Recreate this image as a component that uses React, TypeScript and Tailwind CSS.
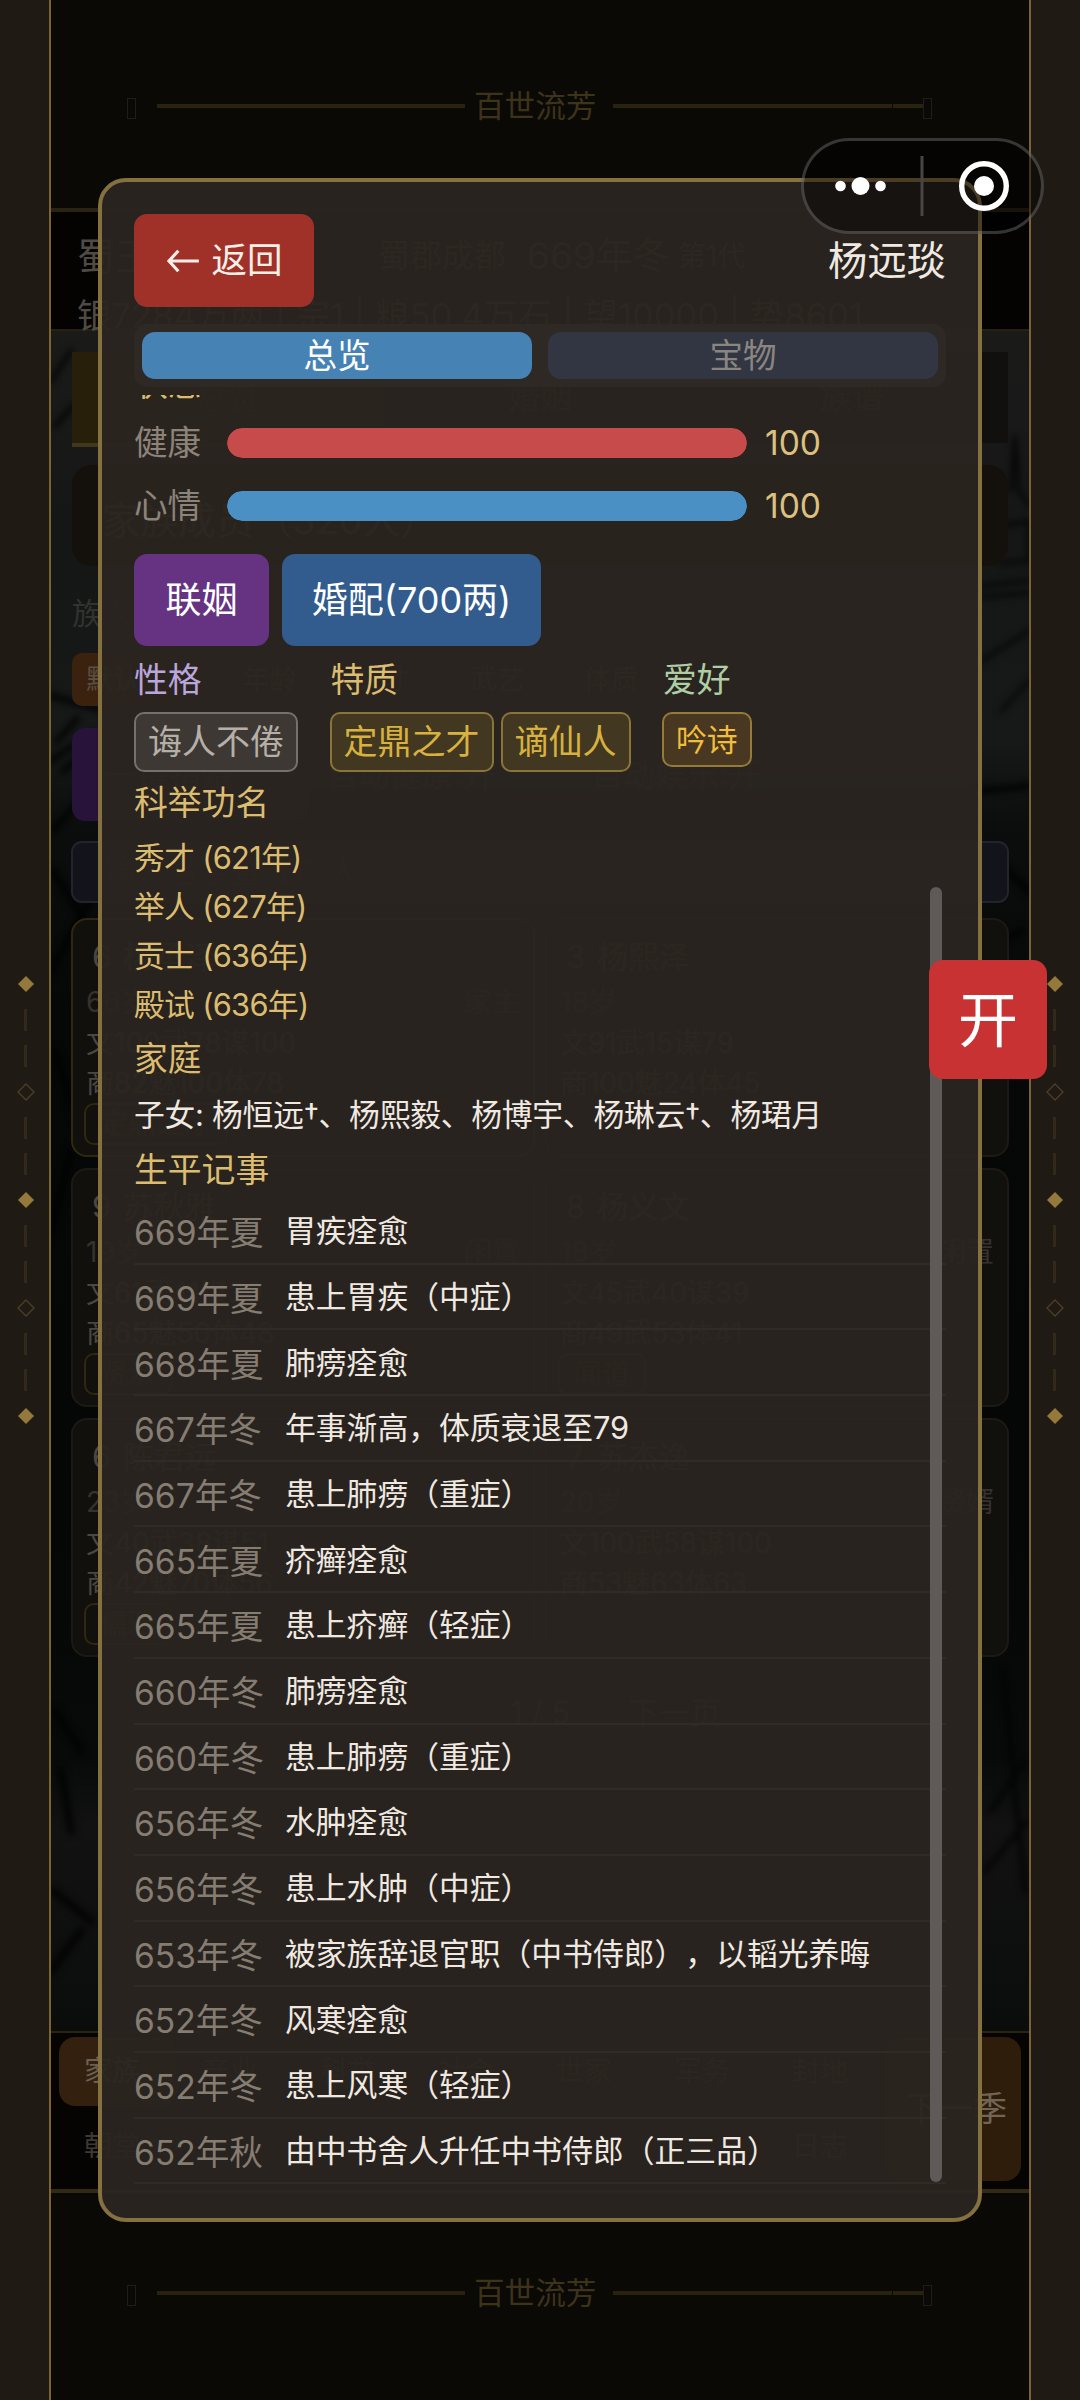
import { clsx } from 'clsx';

type Tone = 'gray' | 'gold' | 'amber';

type Member = {
  index: string;
  name: string;
  age: string;
  status: string;
  line1: string;
  line2: string;
  tag: string;
  highlight?: boolean;
};

const HISTORY = [
  { year: '669年夏', text: '胃疾痊愈' },
  { year: '669年夏', text: '患上胃疾（中症）' },
  { year: '668年夏', text: '肺痨痊愈' },
  { year: '667年冬', text: '年事渐高，体质衰退至79' },
  { year: '667年冬', text: '患上肺痨（重症）' },
  { year: '665年夏', text: '疥癣痊愈' },
  { year: '665年夏', text: '患上疥癣（轻症）' },
  { year: '660年冬', text: '肺痨痊愈' },
  { year: '660年冬', text: '患上肺痨（重症）' },
  { year: '656年冬', text: '水肿痊愈' },
  { year: '656年冬', text: '患上水肿（中症）' },
  { year: '653年冬', text: '被家族辞退官职（中书侍郎），以韬光养晦' },
  { year: '652年冬', text: '风寒痊愈' },
  { year: '652年冬', text: '患上风寒（轻症）' },
  { year: '652年秋', text: '由中书舍人升任中书侍郎（正三品）' },
];

const DEGREES = ['秀才 (621年)', '举人 (627年)', '贡士 (636年)', '殿试 (636年)'];

const MEMBERS: Member[] = [
  { index: '6', name: '杨承泽', age: '66岁', status: '家主', line1: '文100武78谋100', line2: '商82魅100体78', tag: '定鼎之才', highlight: true },
  { index: '3', name: '杨熙泽', age: '18岁', status: '', line1: '文91武15谋79', line2: '商100魅24体45', tag: '' },
  { index: '9', name: '苏秋雅', age: '19岁', status: '闲置', line1: '文61武41谋30', line2: '商65魅50体48', tag: '贤淑' },
  { index: '8', name: '杨义文', age: '18岁', status: '闲置', line1: '文45武40谋39', line2: '商49武53体41', tag: '闻道' },
  { index: '6', name: '陈君远', age: '23岁', status: '', line1: '文40武38谋51', line2: '商42魅70体56', tag: '儒雅' },
  { index: '7', name: '苏杰逸', age: '20岁', status: '赘婿', line1: '文100武58谋100', line2: '商53魅63体63', tag: '' },
];

const NAV_ROWS = [
  ['家族', '产业', '科举', '社会', '世家', '军务', '封地'],
  ['朝堂', '', '', '', '', '', '日志'],
];

const ORNAMENTS = ['solid', 'dash', 'dash', 'hollow', 'dash', 'dash', 'solid', 'dash', 'dash', 'hollow', 'dash', 'dash', 'solid'];

const TAG_TONES: Record<Tone, string> = {
  gray: 'h-[60px] text-[34px] border-[#75706b] bg-[#3d3834] text-[#b5afa8]',
  gold: 'h-[60px] text-[34px] border-[#8a7539] bg-[#423821] text-[#d8b13f]',
  amber: 'h-[55px] text-[30.8px] border-[#967a37] bg-[#483821] text-[#f3bd3c]',
};

function SideRail({ right }: { right?: boolean }) {
  return (
    <div
      className={clsx(
        'flex w-[51px] shrink-0 flex-col items-center justify-center border-[#7b6336] bg-[#1f1a14]',
        right ? 'border-l-2 pr-[2px]' : 'border-r-2 pl-[2px]',
      )}
    >
      {ORNAMENTS.map((kind, i) => (
        <div key={i} className="flex h-[36.05px] w-full items-center justify-center">
          {kind === 'dash' ? (
            <div className="h-[22px] w-[3px] bg-[#33291a]" />
          ) : (
            <svg width="18" height="18" viewBox="0 0 18 18">
              <path
                d="M9 1 17 9 9 17 1 9Z"
                fill={kind === 'solid' ? '#94793a' : 'none'}
                stroke={kind === 'solid' ? 'none' : '#4d3f26'}
                strokeWidth="1.3"
              />
            </svg>
          )}
        </div>
      ))}
    </div>
  );
}

function Banner() {
  return (
    <div className="flex h-[40px] items-center pl-[76px] text-[30.6px] leading-[40px] text-[#3d3318]">
      <div className="mt-[4px] h-[21px] w-[9px] border border-[#221d10]" />
      <div className="ml-[21px] h-[4px] w-[308px] bg-[#29220f]" />
      <span className="ml-[9px] w-[122px] whitespace-nowrap">百世流芳</span>
      <div className="ml-[17px] h-[4px] w-[279px] bg-[#29220f]" />
      <div className="ml-px h-[4px] w-[30px] bg-[#29220f]" />
      <div className="mt-[4px] h-[21px] w-[9px] border border-[#221d10]" />
    </div>
  );
}

/* Ink wash behind the family list */
function InkWash() {
  return (
    <svg className="absolute inset-0 h-full w-full" viewBox="0 0 978 1700" preserveAspectRatio="none">
      <defs>
        <linearGradient id="ink" x1="0" y1="0" x2="0" y2="1">
          <stop offset="0" stopColor="#1a1a19" />
          <stop offset="0.12" stopColor="#151716" />
          <stop offset="0.24" stopColor="#171918" />
          <stop offset="0.29" stopColor="#0c0e0e" />
          <stop offset="0.4" stopColor="#060808" />
          <stop offset="0.7" stopColor="#050707" />
          <stop offset="0.84" stopColor="#080a0a" />
          <stop offset="0.88" stopColor="#111211" />
          <stop offset="1" stopColor="#0b0d0c" />
        </linearGradient>
        <filter id="soft" x="-50%" y="-50%" width="200%" height="200%" colorInterpolationFilters="sRGB">
          <feGaussianBlur stdDeviation="3" />
        </filter>
      </defs>
      <rect width="978" height="1700" fill="url(#ink)" />
      <g filter="url(#soft)" fill="none" stroke="#000" strokeOpacity="0.75" strokeLinecap="round">
        <path d="M0 50 20 20 M4 95 22 75" strokeWidth="5" />
        <path d="M0 365 48 378 M6 410 26 388 M0 430 40 402 M12 440 46 412 M2 500 40 455" strokeWidth="7" />
        <path d="M2 540 40 600 M0 640 44 560 M4 720 30 800 M0 900 20 820" strokeWidth="8" />
        <path d="M930 255 978 250 M930 266 978 262 M930 330 978 300 M950 380 978 350" strokeWidth="4" />
        <path d="M930 460 978 455 M935 520 978 560 M930 620 970 600 M940 700 978 640" strokeWidth="8" />
        <path d="M960 160 964 105 968 160 978 175 M948 195 978 190 978 230 950 232" strokeWidth="4" />
        <path d="M952 1340 962 1440 974 1560 M940 1480 974 1430 M934 1540 976 1490" strokeWidth="5" />
        <path d="M4 1380 30 1420 M10 1440 20 1500 M2 1560 40 1590 M0 1640 30 1600" strokeWidth="8" />
      </g>
    </svg>
  );
}

function MemberCard({ member }: { member: Member }) {
  return (
    <div
      className={clsx(
        'flex h-[239px] flex-col rounded-[16px] border-2 bg-[#12100d] px-[13px] text-[28px] text-[#4c4741]',
        member.highlight ? 'border-[#30270f]' : 'border-[#1d1a15]',
      )}
    >
      <div className="mt-[12px] flex h-[50px] items-center pl-[6px] text-[31px] leading-[50px]">
        <span className="w-[31px]">{member.index}</span>
        {member.name}
      </div>
      <div className="flex h-[41px] justify-between leading-[41px] text-[#35322d]">
        <span>{member.age}</span>
        <span>{member.status}</span>
      </div>
      <p className="h-[40px] leading-[40px]">{member.line1}</p>
      <p className="h-[40px] leading-[40px]">{member.line2}</p>
      {member.tag && (
        <div className="-ml-[2px] h-[42px] w-fit rounded-[10px] border-2 border-[#30270f] px-[14px] leading-[38px] text-[#352c18]">
          {member.tag}
        </div>
      )}
    </div>
  );
}

function GameScreen() {
  return (
    <div className="flex h-[2400px] w-full bg-[#0a0906]">
      <SideRail />
      <div className="flex min-w-0 flex-1 flex-col">
        <div className="h-[208px] pt-[86px]">
          <Banner />
        </div>

        {/* Resource header */}
        <div className="h-[123px] border-t-4 border-b-2 border-t-[#2a2312] border-b-[#27210f] bg-[#040302] text-[#4f4b44]">
          <div className="mt-[19px] flex h-[50px] items-center pl-[26px] text-[38px] leading-[50px] whitespace-nowrap">
            <span className="w-[301px]">蜀王</span>
            <span className="w-[149px] text-[32px]">蜀郡成都</span>
            <span className="w-[151px] text-[37px]">669年冬</span>
            <span className="text-[28px]">第1代</span>
          </div>
          <div className="mt-[13px] h-[40px] pl-[26px] text-[34.5px] leading-[44px] whitespace-nowrap">
            银7284万两 | 宗1 | 粮50.4万石 | 望10000 | 势8601
          </div>
        </div>

        {/* Family page */}
        <div className="relative h-[1700px] overflow-hidden">
          <InkWash />
          <div className="relative flex flex-col px-[21px]">
            <div className="mt-[21px] grid h-[91px] grid-cols-3 bg-[#11100e] text-center text-[32px] leading-[91px] text-[#3a362e]">
              <span className="border-b-4 border-[#44361a] bg-[#281f0b]">总览</span>
              <span>婚姻</span>
              <span>族谱</span>
            </div>
            <div className="mt-[22px] h-[101px] rounded-[20px] bg-[#14110c] pl-[30px] text-[38px] leading-[110px] text-[#4f4b44]">
              家族成员（320人）
            </div>
            <div className="mt-[25px] h-[44px] text-[30px] leading-[44px] text-[#323230]">族人排序</div>
            <div className="mt-[18px] flex h-[53px] gap-[60px] text-[27px] leading-[53px] text-[#5a4f45]">
              <span className="w-[110px] rounded-[10px] bg-[#3a220f] pl-[14px]">默认</span>
              <span>年龄</span>
              <span>文才</span>
              <span>武艺</span>
              <span>体质</span>
            </div>
            <div className="mt-[22px] flex h-[93px] text-[32px] leading-[93px] text-[#403a42]">
              <span className="w-[236px] rounded-[13px] bg-[#28133a] pl-[33px]">一键指婚</span>
              <span className="w-[265px] pl-[18px]">自动健康:开</span>
              <span className="pl-[18px]">自动娱乐:开</span>
            </div>
            <div className="-mx-px mt-[20px] h-[62px] rounded-[11px] border-2 border-[#22232c] bg-[#13141b] pl-[30px] text-[32px] leading-[58px] text-[#35363e]">
              输入名字查找族人...
            </div>
            <div className="-mx-px mt-[15px] grid grid-cols-2 gap-x-[10px] gap-y-[11px]">
              {MEMBERS.map((member) => (
                <MemberCard key={member.name} member={member} />
              ))}
            </div>
            <div className="mt-[34px] flex h-[44px] pl-[438px] text-[31px] leading-[44px] text-[#3a3a38]">
              <span className="w-[118px]">1 / 5</span>
              <span>下一页</span>
            </div>
          </div>
        </div>

        {/* Bottom navigation */}
        <div className="flex h-[162px] justify-between border-t-2 border-b-4 border-t-[#2b2411] border-b-[#332a16] bg-[#050403] pr-[8px] pl-[8px] text-[28px]">
          <div className="flex flex-col pt-[4px] text-[#3e3a33]">
            {NAV_ROWS.map((row, r) => (
              <div key={r} className="flex h-[75px]">
                {row.map((label, i) => (
                  <span
                    key={i}
                    className={clsx(
                      'h-[69px] w-[118px] rounded-[16px] pl-[25px] leading-[69px]',
                      r === 0 && i === 0 && 'bg-[#33200f] text-[#6b6054]',
                    )}
                  >
                    {label}
                  </span>
                ))}
              </div>
            ))}
          </div>
          <div className="mt-[4px] h-[144px] w-[136px] rounded-[16px] bg-[#2e1d0b] pr-[14px] text-right text-[34px] leading-[144px] text-[#716656]">
            下一季
          </div>
        </div>

        <div className="pt-[80px]">
          <Banner />
        </div>
      </div>
      <SideRail right />
    </div>
  );
}

function StatBar({ label, value, color }: { label: string; value: number; color: string }) {
  return (
    <div className="flex items-center text-[33.6px] leading-[50px]">
      <span className="w-[93px] text-[#8c837a]">{label}</span>
      <div className="h-[30px] w-[520px] overflow-hidden rounded-full bg-black/40">
        <div className={clsx('h-full rounded-full', color)} style={{ width: `${value}%` }} />
      </div>
      <span className="ml-[18px] text-[#dcc07f]">{value}</span>
    </div>
  );
}

function Tag({ tone, children }: { tone: Tone; children: string }) {
  return (
    <span className={clsx('flex items-center rounded-[10px] border-2 px-[12px] whitespace-nowrap', TAG_TONES[tone])}>
      {children}
    </span>
  );
}

function SectionTitle({ children }: { children: string }) {
  return <h3 className="h-[50px] text-[33.8px] leading-[50px] text-[#dcbc70]">{children}</h3>;
}

function CharacterModal() {
  return (
    <div className="absolute top-[178px] left-[98px] h-[2044px] w-[884px] rounded-[28px] border-4 border-[#857040] bg-[#2a2520]/95 px-[32px] pt-[32px]">
      <div className="flex h-[93px] items-center justify-between">
        <button className="flex h-full w-[180px] items-center justify-center rounded-[13px] bg-[#a03128] text-[35.5px] text-[#f5efe8]">
          <svg width="36" height="28" viewBox="0 0 38 30" fill="none" stroke="currentColor" strokeWidth="3.4">
            <path d="M36 15H4M14 4 4 15l10 11" />
          </svg>
          <span className="ml-[10px]">返回</span>
        </button>
        <h2 className="mt-[2px] text-[39.3px] text-[#f0e9e1]">杨远琰</h2>
      </div>

      <div className="mt-[17px] flex h-[63px] gap-[16px] rounded-[13px] bg-[#2e2925] p-[8px] text-[33.6px] leading-[47px]">
        <button className="flex-1 rounded-[13px] bg-[#4782b4] text-white">总览</button>
        <button className="flex-1 rounded-[13px] bg-[#323542] text-[#8a8580]">宝物</button>
      </div>

      <div className="mt-[8px] h-[1792px] overflow-hidden">
        <div className="-mt-[36px]">
          <SectionTitle>状态</SectionTitle>
        </div>
        <div className="mt-[9px] flex flex-col gap-[13px]">
          <StatBar label="健康" value={100} color="bg-[#c74b4b]" />
          <StatBar label="心情" value={100} color="bg-[#4a90c4]" />
        </div>

        <div className="mt-[23px] flex h-[92px] gap-[13px] text-[36px] text-white">
          <button className="w-[135px] rounded-[13px] bg-[#653382]">联姻</button>
          <button className="w-[259px] rounded-[13px] bg-[#325b8e]">婚配(700两)</button>
        </div>

        <div className="mt-[9px] flex h-[117px] gap-[31.5px] text-[33.8px] leading-[50px]">
          <div>
            <p className="mb-[7px] text-[#bba5dd]">性格</p>
            <Tag tone="gray">诲人不倦</Tag>
          </div>
          <div>
            <p className="mb-[7px] pl-[1px] text-[#dcbc70]">特质</p>
            <div className="flex gap-[7px]">
              <Tag tone="gold">定鼎之才</Tag>
              <Tag tone="gold">谪仙人</Tag>
            </div>
          </div>
          <div>
            <p className="mb-[7px] pl-[1px] text-[#b0cea4]">爱好</p>
            <Tag tone="amber">吟诗</Tag>
          </div>
        </div>

        <div className="mt-[6px]">
          <SectionTitle>科举功名</SectionTitle>
        </div>
        <ul className="mt-[5px] text-[30.8px] leading-[49px] tracking-[-0.7px] text-[#dcbc70]">
          {DEGREES.map((degree) => (
            <li key={degree}>{degree}</li>
          ))}
        </ul>

        <div className="mt-[5px]">
          <SectionTitle>家庭</SectionTitle>
        </div>
        <p className="mt-[6px] text-[30.8px] leading-[49px] tracking-[-0.26px] whitespace-nowrap text-[#f0e9e1]">
          子女: 杨恒远†、杨熙毅、杨博宇、杨琳云†、杨珺月
        </p>

        <div className="mt-[6px]">
          <SectionTitle>生平记事</SectionTitle>
        </div>
        <ul className="mt-[4px] [text-spacing-trim:space-all]">
          {HISTORY.map((item, i) => (
            <li key={i} className="flex h-[65.7px] items-center border-b-2 border-[#302b27]">
              <span className="mt-[5px] w-[151px] text-[33.6px] text-[#857c72]">{item.year}</span>
              <span className="mt-[1px] text-[30.8px] whitespace-nowrap text-[#f0e9e1]">{item.text}</span>
            </li>
          ))}
        </ul>
      </div>

      {/* Scroll thumb */}
      <div className="absolute top-[705px] right-[36px] h-[1295px] w-[12px] rounded-full bg-[#5d5a58]" />
    </div>
  );
}

function MiniProgramCapsule() {
  return (
    <div className="absolute top-[138px] left-[801px] flex h-[96px] w-[243px] items-center rounded-full border-[3px] border-white/20 bg-black/45">
      <svg width="237" height="90" viewBox="0 0 237 90">
        <g fill="#fff">
          <circle cx="36.5" cy="45" r="5.3" />
          <circle cx="56.5" cy="45" r="9" />
          <circle cx="76.5" cy="45" r="5.3" />
          <circle cx="180" cy="45" r="10" />
        </g>
        <path d="M118 15v60" stroke="#474644" strokeWidth="3" />
        <circle cx="180" cy="45" r="22.3" fill="none" stroke="#fff" strokeWidth="5.4" />
      </svg>
    </div>
  );
}

export default function App() {
  return (
    <div className="relative h-[2400px] w-[1080px] overflow-hidden font-['Inter','Noto_Sans_CJK_SC',sans-serif]">
      <GameScreen />
      <CharacterModal />
      <button className="absolute top-[960px] left-[929px] h-[119px] w-[118px] rounded-[14px] bg-[#c83232] text-[60px] leading-[121px] text-white">
        开
      </button>
      <MiniProgramCapsule />
    </div>
  );
}
